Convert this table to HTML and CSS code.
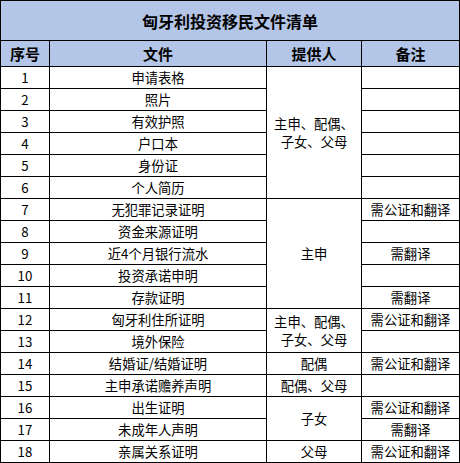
FILE: index.html
```html
<!DOCTYPE html>
<html lang="zh-CN">
<head>
<meta charset="utf-8">
<title>匈牙利投资移民文件清单</title>
<link rel="stylesheet" href="styles.css">
</head>
<body>
<table class="doc-table">
  <colgroup>
    <col class="c-no">
    <col class="c-file">
    <col class="c-who">
    <col class="c-note">
  </colgroup>
  <thead>
    <tr class="title-row"><th colspan="4">匈牙利投资移民文件清单</th></tr>
    <tr class="head-row"><th>序号</th><th>文件</th><th>提供人</th><th>备注</th></tr>
  </thead>
  <tbody>
    <tr><td>1</td><td>申请表格</td><td rowspan="6" class="multi">主申、配偶、<br>子女、父母</td><td></td></tr>
    <tr><td>2</td><td>照片</td><td></td></tr>
    <tr><td>3</td><td>有效护照</td><td></td></tr>
    <tr><td>4</td><td>户口本</td><td></td></tr>
    <tr><td>5</td><td>身份证</td><td></td></tr>
    <tr><td>6</td><td>个人简历</td><td></td></tr>
    <tr><td>7</td><td>无犯罪记录证明</td><td rowspan="5">主申</td><td>需公证和翻译</td></tr>
    <tr><td>8</td><td>资金来源证明</td><td></td></tr>
    <tr><td>9</td><td>近4个月银行流水</td><td>需翻译</td></tr>
    <tr><td>10</td><td>投资承诺申明</td><td></td></tr>
    <tr><td>11</td><td>存款证明</td><td>需翻译</td></tr>
    <tr><td>12</td><td>匈牙利住所证明</td><td rowspan="2" class="multi">主申、配偶、<br>子女、父母</td><td>需公证和翻译</td></tr>
    <tr><td>13</td><td>境外保险</td><td></td></tr>
    <tr><td>14</td><td>结婚证/结婚证明</td><td>配偶</td><td>需公证和翻译</td></tr>
    <tr><td>15</td><td>主申承诺赡养声明</td><td>配偶、父母</td><td></td></tr>
    <tr><td>16</td><td>出生证明</td><td rowspan="2">子女</td><td>需公证和翻译</td></tr>
    <tr><td>17</td><td>未成年人声明</td><td>需翻译</td></tr>
    <tr><td>18</td><td>亲属关系证明</td><td>父母</td><td>需公证和翻译</td></tr>
  </tbody>
</table>
</body>
</html>
```
FILE: styles.css
```css
html, body {
  margin: 0;
  padding: 0;
  background: #ffffff;
}

.doc-table {
  border-collapse: collapse;
  table-layout: fixed;
  width: 459px;
  font-family: "Noto Sans CJK SC", "Microsoft YaHei", sans-serif;
  color: #000000;
}

.c-no { width: 49px; }
.c-file { width: 217px; }
.c-who { width: 95px; }
.c-note { width: 98px; }

.doc-table th,
.doc-table td {
  border: 1px solid #000000;
  padding: 0 2px;
  text-align: center;
  vertical-align: middle;
  white-space: nowrap;
}

.title-row th {
  height: 39px;
  background: #b4c6e7;
  font-size: 16px;
  font-weight: 700;
}

.head-row th {
  height: 25px;
  background: #b4c6e7;
  font-size: 15px;
  font-weight: 700;
}

.doc-table td {
  height: 21px;
  font-size: 13.3px;
  line-height: 18px;
}

.doc-table td.multi {
  line-height: 18px;
}
```
